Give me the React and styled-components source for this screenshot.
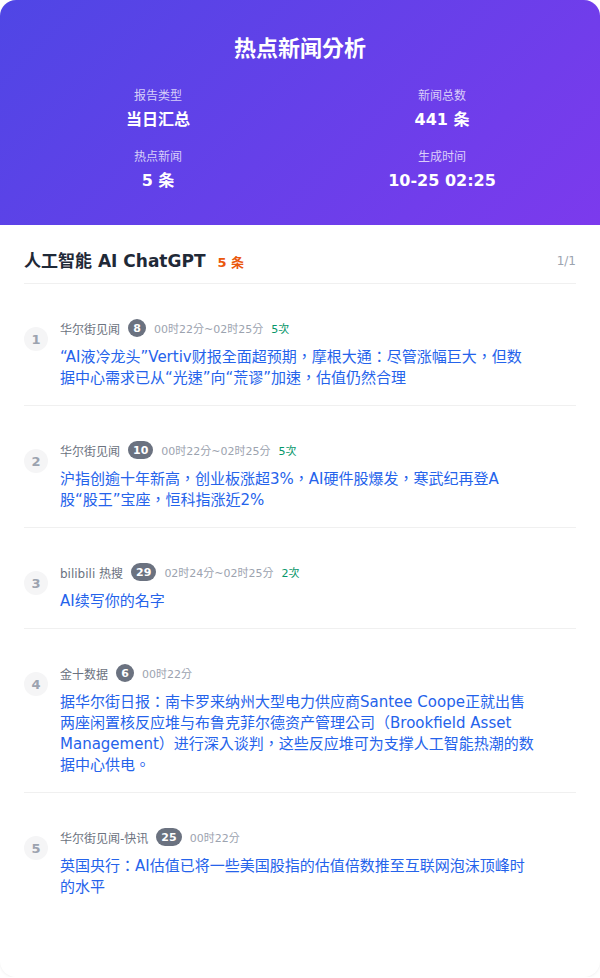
import styled, { createGlobalStyle } from 'styled-components'

const GlobalStyle = createGlobalStyle`
  * { box-sizing: border-box; }
  body {
    margin: 0;
    background: #ffffff;
    font-family: "DejaVu Sans", "Noto Sans CJK TC", sans-serif;
  }
`

const Card = styled.div`
  width: 600px;
  min-height: 977px;
  background: #ffffff;
  border-radius: 16px;
  overflow: hidden;
  box-shadow: 0 1px 3px rgba(0, 0, 0, 0.06);
`

const Header = styled.header`
  background: linear-gradient(135deg, #4f46e5 0%, #7c3aed 100%);
  color: #ffffff;
  padding: 33px 32px 32px;
  text-align: center;
`

const Title = styled.h1`
  margin: 0 0 23px;
  font-size: 22px;
  line-height: 31px;
  font-weight: 700;
`

const InfoGrid = styled.div`
  display: grid;
  grid-template-columns: 1fr 1fr;
  column-gap: 32px;
  row-gap: 16px;
`

const InfoItem = styled.div`
  display: flex;
  flex-direction: column;
  align-items: center;
`

const InfoLabel = styled.div`
  font-size: 12px;
  line-height: 18px;
  color: rgba(255, 255, 255, 0.75);
  margin-bottom: 3px;
`

const InfoValue = styled.div`
  font-size: 16px;
  line-height: 24px;
  font-weight: 700;
`

const Body = styled.section`
  padding: 24px 24px 62px;
`

const SectionHead = styled.div`
  display: flex;
  align-items: center;
  padding-bottom: 10px;
  border-bottom: 1px solid #f0f0f0;
`

const SectionName = styled.h2`
  margin: 0;
  font-size: 17px;
  line-height: 24px;
  font-weight: 700;
  color: #1f2937;
`

const SectionCount = styled.span`
  margin-left: 12px;
  font-size: 13px;
  font-weight: 700;
  color: #ea580c;
`

const Pager = styled.span`
  margin-left: auto;
  font-size: 12px;
  color: #9ca3af;
`

const Item = styled.div`
  display: flex;
  align-items: flex-start;
  gap: 12px;
  padding: 35px 0 16px;
  border-bottom: ${p => (p.$last ? 'none' : '1px solid #f0f0f0')};
`

const Rank = styled.div`
  flex: none;
  width: 24px;
  height: 24px;
  margin-top: 8px;
  border-radius: 50%;
  background: #f5f5f6;
  color: #9ca3af;
  font-size: 13px;
  font-weight: 700;
  display: flex;
  align-items: center;
  justify-content: center;
`

const Content = styled.div`
  flex: 1;
  min-width: 0;
`

const Meta = styled.div`
  display: flex;
  align-items: center;
  gap: 8px;
  height: 18px;
  margin-bottom: 10px;
`

const Source = styled.span`
  font-size: 12px;
  color: #6b7280;
`

const Badge = styled.span`
  min-width: 18px;
  height: 18px;
  padding: 0 5px;
  border-radius: 9px;
  background: #6b7280;
  color: #ffffff;
  font-size: 11px;
  font-weight: 700;
  display: inline-flex;
  align-items: center;
  justify-content: center;
`

const Time = styled.span`
  font-size: 11px;
  color: #9ca3af;
`

const Hits = styled.span`
  font-size: 11px;
  color: #059669;
`

const NewsTitle = styled.a`
  display: block;
  max-width: 475px;
  font-size: 15px;
  line-height: 21px;
  color: #2563eb;
  text-decoration: none;
`

const info = [
  { label: '报告类型', value: '当日汇总' },
  { label: '新闻总数', value: '441 条' },
  { label: '热点新闻', value: '5 条' },
  { label: '生成时间', value: '10-25 02:25' },
]

const news = [
  {
    source: '华尔街见闻',
    rank: 8,
    time: '00时22分~02时25分',
    hits: '5次',
    title: '“AI液冷龙头”Vertiv财报全面超预期，摩根大通：尽管涨幅巨大，但数据中心需求已从“光速”向“荒谬”加速，估值仍然合理',
  },
  {
    source: '华尔街见闻',
    rank: 10,
    time: '00时22分~02时25分',
    hits: '5次',
    title: '沪指创逾十年新高，创业板涨超3%，AI硬件股爆发，寒武纪再登A股“股王”宝座，恒科指涨近2%',
  },
  {
    source: 'bilibili 热搜',
    rank: 29,
    time: '02时24分~02时25分',
    hits: '2次',
    title: 'AI续写你的名字',
  },
  {
    source: '金十数据',
    rank: 6,
    time: '00时22分',
    title: '据华尔街日报：南卡罗来纳州大型电力供应商Santee Coope正就出售两座闲置核反应堆与布鲁克菲尔德资产管理公司（Brookfield Asset Management）进行深入谈判，这些反应堆可为支撑人工智能热潮的数据中心供电。',
  },
  {
    source: '华尔街见闻-快讯',
    rank: 25,
    time: '00时22分',
    title: '英国央行：AI估值已将一些美国股指的估值倍数推至互联网泡沫顶峰时的水平',
  },
]

export default function App() {
  return (
    <>
      <GlobalStyle />
      <Card>
        <Header>
          <Title>热点新闻分析</Title>
          <InfoGrid>
            {info.map(i => (
              <InfoItem key={i.label}>
                <InfoLabel>{i.label}</InfoLabel>
                <InfoValue>{i.value}</InfoValue>
              </InfoItem>
            ))}
          </InfoGrid>
        </Header>
        <Body>
          <SectionHead>
            <SectionName>人工智能 AI ChatGPT</SectionName>
            <SectionCount>5 条</SectionCount>
            <Pager>1/1</Pager>
          </SectionHead>
          {news.map((n, idx) => (
            <Item key={idx} $last={idx === news.length - 1}>
              <Rank>{idx + 1}</Rank>
              <Content>
                <Meta>
                  <Source>{n.source}</Source>
                  <Badge>{n.rank}</Badge>
                  <Time>{n.time}</Time>
                  {n.hits && <Hits>{n.hits}</Hits>}
                </Meta>
                <NewsTitle href="#">{n.title}</NewsTitle>
              </Content>
            </Item>
          ))}
        </Body>
      </Card>
    </>
  )
}
